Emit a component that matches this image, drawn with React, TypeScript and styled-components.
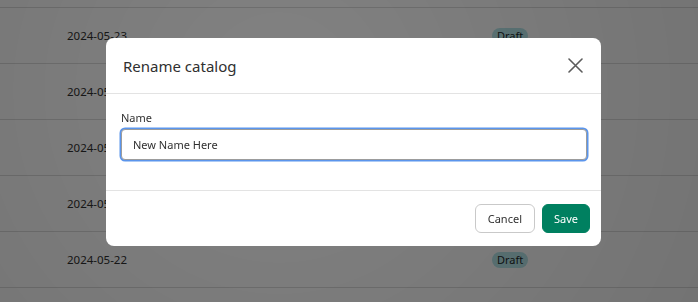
import styled, { createGlobalStyle } from 'styled-components';

const GlobalStyle = createGlobalStyle`
    html, body {
        margin: 0;
        padding: 0;
        background: #ffffff;
        font-family: 'Noto Sans', 'Open Sans', sans-serif;
        overflow: hidden;
    }
`;

const Page = styled.div`
    width: 698px;
    height: 302px;
    overflow: hidden;
    background: #ffffff;
`;

const List = styled.div`
    margin-top: -48px;
`;

const Row = styled.div`
    height: 55px;
    border-bottom: 1px solid #dcdcdc;
    display: flex;
    align-items: center;
    padding-left: 67px;
    font-size: 11.5px;
    color: #303030;
`;

const DateCell = styled.div`
    width: 425px;
`;

const Badge = styled.span`
    display: inline-block;
    background: #b6e6ea;
    color: #1f2a2b;
    font-size: 11px;
    line-height: 16px;
    padding: 0 5px;
    border-radius: 8px;
`;

const Overlay = styled.div`
    position: fixed;
    inset: 0;
    background: radial-gradient(circle at 40% 30%, rgba(0, 0, 0, 0.49), rgba(0, 0, 0, 0.55));
`;

const Modal = styled.div`
    position: fixed;
    left: 106px;
    top: 38px;
    width: 495px;
    background: #ffffff;
    border-radius: 8px;
    display: flex;
    flex-direction: column;
`;

const Header = styled.div`
    height: 55px;
    display: flex;
    align-items: center;
    justify-content: space-between;
    padding: 0 16px 0 17px;
    border-bottom: 1px solid #e3e3e3;
`;

const Title = styled.h2`
    margin: 0;
    font-size: 15px;
    font-weight: 400;
    color: #303030;
`;

const CloseButton = styled.button`
    border: none;
    background: none;
    padding: 0;
    width: 20px;
    height: 20px;
    display: flex;
    align-items: center;
    justify-content: center;
    cursor: pointer;
`;

const Body = styled.div`
    height: 97px;
    padding: 16px 14px 0 15px;
    border-bottom: 1px solid #e3e3e3;
    box-sizing: border-box;
`;

const Label = styled.label`
    display: block;
    font-size: 11px;
    line-height: 15px;
    color: #303030;
    margin-bottom: 4px;
`;

const Input = styled.input`
    width: 100%;
    height: 31px;
    box-sizing: border-box;
    border: 1px solid #9c9c9c;
    border-radius: 4px;
    box-shadow: 0 0 0 1.5px #5b95ec;
    outline: none;
    padding: 0 11px;
    font-family: inherit;
    font-size: 11px;
    color: #303030;
    caret-color: #000000;
`;

const Footer = styled.div`
    height: 55px;
    display: flex;
    align-items: center;
    justify-content: flex-end;
    gap: 7px;
    padding: 0 11px 0 16px;
    box-sizing: border-box;
`;

const Button = styled.button<{ $primary?: boolean }>`
    height: 29px;
    padding: 0 ${(p) => (p.$primary ? '11px' : '12px')};
    border-radius: 6px;
    font-family: inherit;
    font-size: 11px;
    cursor: pointer;
    border: 1px solid ${(p) => (p.$primary ? '#008060' : '#c9c9c9')};
    background: ${(p) => (p.$primary ? '#008060' : '#ffffff')};
    color: ${(p) => (p.$primary ? '#ffffff' : '#303030')};
`;

const rows = [
    { date: '', badge: '' },
    { date: '2024-05-23', badge: 'Draft' },
    { date: '2024-05-23', badge: 'Draft' },
    { date: '2024-05-23', badge: 'Draft' },
    { date: '2024-05-22', badge: 'Draft' },
    { date: '2024-05-22', badge: 'Draft' },
    { date: '', badge: '' },
];

export default function App() {
    return (
        <Page>
            <GlobalStyle />
            <List>
                {rows.map((r, i) => (
                    <Row key={i}>
                        <DateCell>{r.date}</DateCell>
                        {r.badge && <Badge>{r.badge}</Badge>}
                    </Row>
                ))}
            </List>
            <Overlay />
            <Modal>
                <Header>
                    <Title>Rename catalog</Title>
                    <CloseButton aria-label="Close">
                        <svg width="15" height="15" viewBox="0 0 15 15">
                            <path d="M1 1L14 14M14 1L1 14" stroke="#5c5c5c" strokeWidth="1.6" strokeLinecap="round" />
                        </svg>
                    </CloseButton>
                </Header>
                <Body>
                    <Label>Name</Label>
                    <Input defaultValue="New Name Here" autoFocus />
                </Body>
                <Footer>
                    <Button>Cancel</Button>
                    <Button $primary>Save</Button>
                </Footer>
            </Modal>
        </Page>
    );
}
